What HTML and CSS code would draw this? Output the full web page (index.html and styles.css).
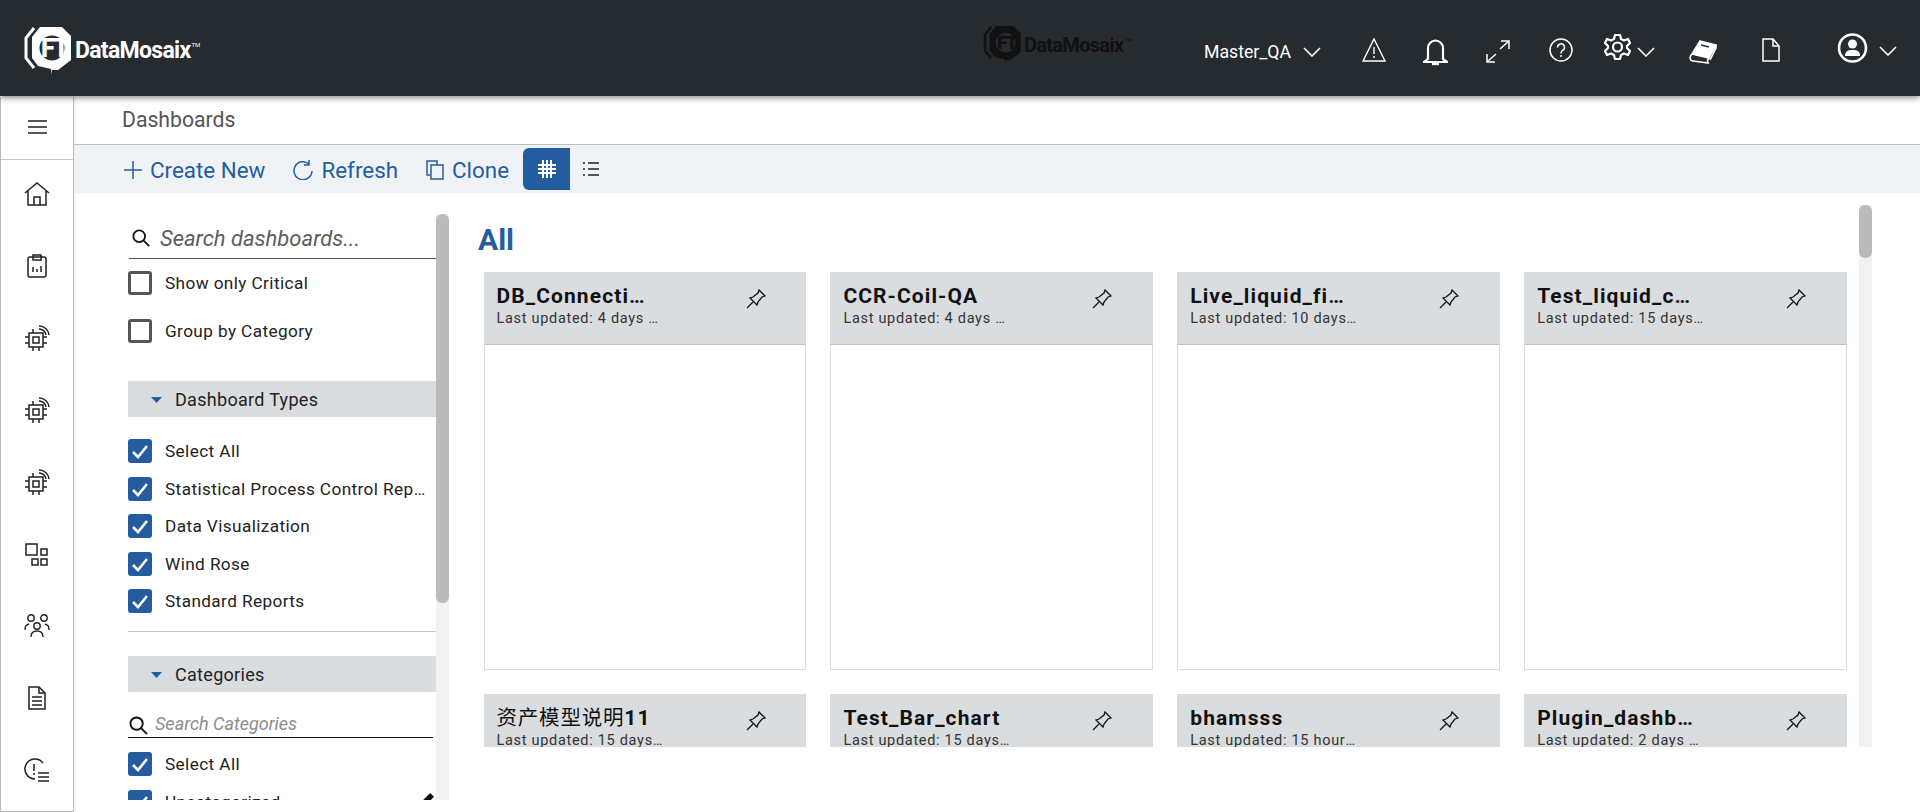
FILE: index.html
```html
<!DOCTYPE html>
<html lang="en">
<head>
  <meta charset="UTF-8">
  <title>Dashboards - DataMosaix</title>
  <link rel="stylesheet" href="styles.css">
</head>
<body>
  <svg class="defs" width="0" height="0">
    <symbol id="mark" viewBox="0 0 47 48">
      <path d="M16 0H38L47 9V33L34 43H28V48L27 42L14 39L8 31V10Z" fill="currentColor"/>
      <path d="M10 1L2 11V31L10 41" fill="none" stroke="currentColor" stroke-width="3"/>
      <circle cx="28" cy="21" r="12.5" fill="#262b30"/>
    </symbol>
    <symbol id="chevron" viewBox="0 0 18 10">
      <path d="M1 1L9 9L17 1" fill="none" stroke="currentColor" stroke-width="1.6"/>
    </symbol>
    <symbol id="chip" viewBox="0 0 26 26" fill="none" stroke="#222" stroke-width="1.5">
      <path d="M5 8H19V22H5Z"/>
      <path d="M9 12H15V18H9Z"/>
      <path d="M1 12H5M1 18H5M19 12H23M19 18H23M9 22V26M15 22V26M9 4V8"/>
      <path d="M15 4A7 7 0 0 1 22 10M15 1A10 10 0 0 1 25 10"/>
    </symbol>
    <symbol id="pin" viewBox="0 0 20 20" fill="none" stroke="#111" stroke-width="1.3">
      <path d="M13 1L19 7L16 8L12 13L11 16L4 9L7 8L12 4Z"/>
      <path d="M7 13L1 19"/>
    </symbol>
    <symbol id="search" viewBox="0 0 20 20" fill="none" stroke="#111" stroke-width="2">
      <circle cx="8" cy="8" r="6.5"/>
      <path d="M13 13L19 19"/>
    </symbol>
    <symbol id="tick" viewBox="0 0 24 24">
      <path d="M5 13L10 18L19 7" fill="none" stroke="#fff" stroke-width="2.6"/>
    </symbol>
    <symbol id="caret" viewBox="0 0 11 6">
      <path d="M0 0H11L5.500 6Z" fill="#245d9f"/>
    </symbol>
  </svg>

  <header class="top-bar">
    <div class="logo logo-main">
      <svg width="47" height="48"><use href="#mark"/></svg>
      <span class="logo-ft">FT</span>
      <span class="logo-name">DataMosaix</span><span class="logo-tm">TM</span>
    </div>
    <div class="logo logo-tenant">
      <svg width="38" height="38"><use href="#mark"/></svg>
      <span class="logo-ft">FT</span>
      <span class="logo-name">DataMosaix</span><span class="logo-tm">TM</span>
    </div>
    <div class="top-tools">
      <span class="tenant-name">Master_QA</span>
      <svg class="ic-tenant-chev" width="18" height="10"><use href="#chevron"/></svg>
      <svg class="ic-warn" width="24" height="24" viewBox="0 0 24 24" fill="none" stroke="#fff" stroke-width="1.4">
        <path d="M12 1L23 23H1Z"/>
        <path d="M12 9V16M12 18V20"/>
      </svg>
      <svg class="ic-bell" width="25" height="27" viewBox="0 0 25 27" fill="none" stroke="#fff" stroke-width="2.2">
        <path d="M5 20V9A7.500 7.500 0 0 1 20 9V20L24 23H1Z"/>
        <path d="M9 25H16" stroke-width="2.400"/>
      </svg>
      <svg class="ic-expand" width="24" height="23" viewBox="0 0 24 23" fill="none" stroke="#fff" stroke-width="1.5">
        <path d="M14 9L23 1M15 1H23V9M10 14L1 22M1 14V22H9"/>
      </svg>
      <svg class="ic-help" width="24" height="24" viewBox="0 0 24 24" fill="none" stroke="#fff" stroke-width="1.5">
        <circle cx="12" cy="12" r="11"/>
        <path d="M8.500 9.500A3.500 3.500 0 1 1 13.500 12.500C12.500 13 12 13.500 12 15.500M12 17V19"/>
      </svg>
      <svg class="ic-gear" width="27" height="26" viewBox="0 0 27 26" fill="none" stroke="#fff" stroke-width="2.2">
        <circle cx="13.500" cy="13" r="4.500"/>
        <path d="M11 1H16L17 5L20 6.500L24 5L26 9L23 12V14L26 17L24 21L20 19.500L17 21L16 25H11L10 21L7 19.500L3 21L1 17L4 14V12L1 9L3 5L7 6.500L10 5Z" stroke-linejoin="round"/>
      </svg>
      <svg class="ic-gear-chev" width="18" height="10"><use href="#chevron"/></svg>
      <svg class="ic-book" width="28" height="24" viewBox="0 0 28 24" fill="none" stroke="#fff" stroke-width="1.600">
        <path d="M11 1L27 5L20 18L3 14Z" fill="#fff"/>
        <path d="M3 14C0 17 1 21 4 21L19 23C18 21 18 20 20 18M27 5L27 8L21 20"/>
        <path d="M12 5L20 7" stroke="#262b30"/>
      </svg>
      <svg class="ic-file" width="18" height="24" viewBox="0 0 18 24" fill="none" stroke="#fff" stroke-width="1.500">
        <path d="M1 1H11L17 8V23H1Z"/>
        <path d="M11 1V8H17"/>
      </svg>
      <svg class="ic-user" width="31" height="30" viewBox="0 0 31 30">
        <circle cx="15.500" cy="15" r="13.500" fill="none" stroke="#fff" stroke-width="2.600"/>
        <circle cx="15.500" cy="11" r="4.500" fill="#fff"/>
        <path d="M8 23C8 18 11 17 15.500 17C20 17 23 18 23 23Z" fill="#fff"/>
      </svg>
      <svg class="ic-user-chev" width="18" height="10"><use href="#chevron"/></svg>
    </div>
  </header>

  <div class="app-body">
    <nav class="side-nav">
      <div class="side-toggle">
        <svg width="19" height="14" viewBox="0 0 19 14" fill="none" stroke="#222" stroke-width="1.500">
          <path d="M0 1H19M0 7H19M0 13H19"/>
        </svg>
      </div>
      <div class="side-links">
        <span class="side-link">
          <svg width="26" height="24" viewBox="0 0 26 24" fill="none" stroke="#222" stroke-width="1.500">
            <path d="M1 11L13 1L25 11M4 9V23H22V9M10 23V15H16V23"/>
          </svg>
        </span>
        <span class="side-link">
          <svg width="20" height="24" viewBox="0 0 20 24" fill="none" stroke="#222" stroke-width="1.500">
            <rect x="1" y="3" width="18" height="20" rx="2"/>
            <path d="M6 6V1H14V6ZM6 18V13M10 18V15M14 18V12"/>
          </svg>
        </span>
        <span class="side-link"><svg width="26" height="26"><use href="#chip"/></svg></span>
        <span class="side-link"><svg width="26" height="26"><use href="#chip"/></svg></span>
        <span class="side-link"><svg width="26" height="26"><use href="#chip"/></svg></span>
        <span class="side-link">
          <svg width="24" height="23" viewBox="0 0 24 23" fill="none" stroke="#222" stroke-width="1.500">
            <rect x="1" y="1" width="11" height="11"/>
            <rect x="16" y="6" width="6" height="6"/>
            <rect x="7" y="16" width="6" height="6"/>
            <rect x="16" y="16" width="6" height="6"/>
          </svg>
        </span>
        <span class="side-link">
          <svg width="26" height="24" viewBox="0 0 26 24" fill="none" stroke="#222" stroke-width="1.400">
            <circle cx="7" cy="4" r="3.200"/>
            <circle cx="20" cy="4" r="3.200"/>
            <circle cx="13" cy="12" r="3.200"/>
            <path d="M1 16C1 12 2 11 5 10M25 16C25 12 24 11 21 10M7 23C7 19 9 17 13 17C17 17 19 19 19 23"/>
          </svg>
        </span>
        <span class="side-link">
          <svg width="18" height="24" viewBox="0 0 18 24" fill="none" stroke="#222" stroke-width="1.500">
            <path d="M1 1H11L17 7V23H1Z"/>
            <path d="M11 1V7H17M4 11H14M4 15H14M4 19H14"/>
          </svg>
        </span>
        <span class="side-link">
          <svg width="26" height="24" viewBox="0 0 26 24" fill="none" stroke="#222" stroke-width="1.500">
            <path d="M19 5A10 10 0 1 0 11 21"/>
            <path d="M10 6V13M10 15V17M14 15H25M14 19H25M14 23H25"/>
          </svg>
        </span>
      </div>
    </nav>

    <main class="page">
      <div class="crumb">Dashboards</div>
      <div class="toolbar">
        <a class="tool-btn">
          <svg width="18" height="18" viewBox="0 0 18 18" fill="none" stroke="#245d9f" stroke-width="1.500"><path d="M9 0V18M0 9H18"/></svg>
          Create New
        </a>
        <a class="tool-btn">
          <svg width="20" height="20" viewBox="0 0 20 20" fill="none" stroke="#245d9f" stroke-width="1.500">
            <path d="M16 4A9 9 0 1 0 19 11M16 0V5H11"/>
          </svg>
          Refresh
        </a>
        <a class="tool-btn">
          <svg width="18" height="20" viewBox="0 0 18 20" fill="none" stroke="#245d9f" stroke-width="1.500">
            <path d="M4 15H1V1H11V5"/>
            <rect x="5" y="5" width="12" height="14"/>
          </svg>
          Clone
        </a>
        <span class="view-btn view-active">
          <svg width="18" height="18" viewBox="0 0 18 18" fill="none" stroke="#fff" stroke-width="2">
            <path d="M5 0V18M9 0V18M13 0V18M0 5H18M0 9H18M0 13H18"/>
          </svg>
        </span>
        <span class="view-btn">
          <svg width="16" height="14" viewBox="0 0 16 14" fill="none" stroke="#222" stroke-width="1.500">
            <path d="M0 1H2M5 1H16M0 7H2M5 7H16M0 13H2M5 13H16"/>
          </svg>
        </span>
      </div>

      <div class="content">
        <aside class="filters">
          <div class="filters-inner">
            <div class="search-box">
              <svg width="18" height="18"><use href="#search"/></svg>
              <span>Search dashboards...</span>
            </div>
            <label class="check-row first-check"><span class="box"></span><span class="check-text">Show only Critical</span></label>
            <label class="check-row group-check"><span class="box"></span><span class="check-text">Group by Category</span></label>

            <div class="section-bar types-bar"><svg width="11" height="6"><use href="#caret"/></svg>Dashboard Types</div>
            <label class="check-row"><span class="box box-on"><svg width="24" height="24"><use href="#tick"/></svg></span><span class="check-text">Select All</span></label>
            <label class="check-row"><span class="box box-on"><svg width="24" height="24"><use href="#tick"/></svg></span><span class="check-text">Statistical Process Control Reports</span></label>
            <label class="check-row"><span class="box box-on"><svg width="24" height="24"><use href="#tick"/></svg></span><span class="check-text">Data Visualization</span></label>
            <label class="check-row"><span class="box box-on"><svg width="24" height="24"><use href="#tick"/></svg></span><span class="check-text">Wind Rose</span></label>
            <label class="check-row"><span class="box box-on"><svg width="24" height="24"><use href="#tick"/></svg></span><span class="check-text">Standard Reports</span></label>
            <hr class="filter-line">

            <div class="section-bar"><svg width="11" height="6"><use href="#caret"/></svg>Categories</div>
            <div class="cat-search">
              <svg width="19" height="19"><use href="#search"/></svg>
              <span>Search Categories</span>
            </div>
            <label class="check-row"><span class="box box-on"><svg width="24" height="24"><use href="#tick"/></svg></span><span class="check-text">Select All</span></label>
            <label class="check-row"><span class="box box-on"><svg width="24" height="24"><use href="#tick"/></svg></span><span class="check-text">Uncategorized</span>
              <svg class="cat-edit" width="14" height="14" viewBox="0 0 11 11"><path d="M0 11V8L8 0L11 3L3 11Z" fill="#111"/></svg>
            </label>
          </div>
          <div class="scroll-track"><div class="scroll-thumb filters-thumb"></div></div>
        </aside>

        <section class="boards">
          <div class="boards-inner">
            <h2 class="boards-title">All</h2>
            <div class="board-grid">
              <article class="card"><div class="card-head"><div class="card-text"><div class="card-name">DB_Connection_Test</div><div class="card-date">Last updated: 4 days ago</div></div><svg width="20" height="20"><use href="#pin"/></svg></div></article>
              <article class="card"><div class="card-head"><div class="card-text"><div class="card-name">CCR-Coil-QA</div><div class="card-date">Last updated: 4 days ago</div></div><svg width="20" height="20"><use href="#pin"/></svg></div></article>
              <article class="card"><div class="card-head"><div class="card-text"><div class="card-name">Live_liquid_fill_board</div><div class="card-date">Last updated: 10 days ago</div></div><svg width="20" height="20"><use href="#pin"/></svg></div></article>
              <article class="card"><div class="card-head"><div class="card-text"><div class="card-name">Test_liquid_chart</div><div class="card-date">Last updated: 15 days ago</div></div><svg width="20" height="20"><use href="#pin"/></svg></div></article>
              <article class="card"><div class="card-head"><div class="card-text"><div class="card-name"><span class="name-cjk">资产模型说明</span>11</div><div class="card-date">Last updated: 15 days ago</div></div><svg width="20" height="20"><use href="#pin"/></svg></div></article>
              <article class="card"><div class="card-head"><div class="card-text"><div class="card-name">Test_Bar_chart</div><div class="card-date">Last updated: 15 days ago</div></div><svg width="20" height="20"><use href="#pin"/></svg></div></article>
              <article class="card"><div class="card-head"><div class="card-text"><div class="card-name">bhamsss</div><div class="card-date">Last updated: 15 hours ago</div></div><svg width="20" height="20"><use href="#pin"/></svg></div></article>
              <article class="card"><div class="card-head"><div class="card-text"><div class="card-name">Plugin_dashboard</div><div class="card-date">Last updated: 2 days ago</div></div><svg width="20" height="20"><use href="#pin"/></svg></div></article>
            </div>
          </div>
          <div class="scroll-track"><div class="scroll-thumb boards-thumb"></div></div>
        </section>
      </div>
    </main>
  </div>
</body>
</html>
```

FILE: styles.css
```css
* {
  box-sizing: border-box;
}
body {
  font-family: Roboto, 'Noto Sans CJK SC', sans-serif;
  margin: 0;
  height: 812px;
  overflow: hidden;
  background: #ffffff;
  color: #222222;
  display: flex;
  flex-direction: column;
}
svg {
  display: block;
  flex: none;
}
.defs {
  position: absolute;
}

/* Top bar */
.top-bar {
  height: 96px;
  flex: none;
  background: #262b30;
  box-shadow: 0 2px 6px rgba(0, 0, 0, 0.45);
  display: flex;
  align-items: center;
  padding-left: 24px;
  position: relative;
  z-index: 2;
}
.logo {
  display: flex;
  position: relative;
}
.logo-main {
  color: #ffffff;
  align-items: center;
  margin-top: 6px;
  width: 173px;
}
.logo-tenant {
  color: #111111;
  align-items: center;
  margin-top: -6px;
  margin-left: 786px;
  width: 142px;
}
.logo-ft {
  position: absolute;
  font-weight: 900;
  letter-spacing: -1.5px;
  color: #ffffff;
}
.logo-main .logo-ft {
  left: 17px;
  top: 9px;
  font-size: 25px;
  line-height: 25px;
}
.logo-tenant .logo-ft {
  left: 14px;
  top: 7px;
  font-size: 19px;
  line-height: 20px;
  color: #111111;
}
.logo-name {
  font-weight: 700;
  letter-spacing: -0.7px;
}
.logo-main .logo-name {
  font-size: 23px;
  margin-left: 4px;
  margin-top: -2px;
}
.logo-tenant .logo-name {
  font-size: 20px;
  margin-left: 3px;
}
.logo-tm {
  font-size: 6px;
  margin-left: 1px;
  align-self: flex-start;
}
.logo-main .logo-tm {
  margin-top: 14px;
}
.logo-tenant .logo-tm {
  margin-top: 10px;
}
.top-tools {
  margin-left: auto;
  padding-right: 23px;
  display: flex;
  align-items: center;
  color: #ffffff;
}
.tenant-name {
  font-size: 17.7px;
  margin-top: 8px;
}
.ic-tenant-chev { margin: 7px 0 0 12px; }
.ic-warn { margin: 4px 0 0 41px; }
.ic-bell { margin: 9px 0 0 37px; }
.ic-expand { margin: 7px 0 0 38px; }
.ic-help { margin: 4px 0 0 39px; }
.ic-gear { margin: -2px 0 0 31px; }
.ic-gear-chev { margin: 7px 0 0 6px; }
.ic-book { margin: 8px 0 0 34px; }
.ic-file { margin: 4px 0 0 45px; }
.ic-user { margin: 0 0 0 57px; }
.ic-user-chev { margin: 6px 0 0 11px; }

/* Page frame */
.app-body {
  flex: 1;
  display: flex;
  min-height: 0;
}
.side-nav {
  width: 74px;
  flex: none;
  margin-top: 1px;
  border: 1px solid #b9bdc1;
  border-top: none;
  background: #ffffff;
  box-shadow: 2px 0 3px rgba(0, 0, 0, 0.05);
  display: flex;
  flex-direction: column;
}
.side-toggle {
  height: 63px;
  flex: none;
  padding-bottom: 2px;
  border-bottom: 1px solid #c9cccf;
  display: flex;
  align-items: center;
  justify-content: center;
}
.side-links {
  display: flex;
  flex-direction: column;
  margin-top: -2px;
}
.side-link {
  height: 72px;
  display: flex;
  align-items: center;
  justify-content: center;
}
.page {
  flex: 1;
  min-width: 0;
  display: flex;
  flex-direction: column;
}
.crumb {
  height: 49px;
  flex: none;
  padding-left: 48px;
  font-size: 21.2px;
  line-height: 48px;
  color: #555555;
  border-bottom: 1px solid #b9bdc1;
}
.toolbar {
  height: 48px;
  flex: none;
  background: #eff3f6;
  display: flex;
  align-items: center;
  padding-left: 50px;
  color: #245d9f;
}
.tool-btn {
  display: flex;
  align-items: center;
  gap: 8px;
  font-size: 22.4px;
  line-height: 28px;
  padding-top: 2px;
  margin-right: 28px;
}
.view-btn {
  width: 47px;
  height: 42px;
  display: flex;
  align-items: center;
  justify-content: center;
}
.view-active {
  background: #245d9f;
  border-radius: 6px 0 0 6px;
  margin-left: -14px;
}
.view-btn:last-child {
  margin-left: -3px;
}

/* Filters */
.content {
  flex: 1;
  min-height: 0;
  display: flex;
}
.filters {
  width: 375px;
  flex: none;
  height: 586px;
  margin-top: 21px;
  padding-left: 54px;
  display: flex;
}
.filters-inner {
  width: 308px;
  flex: none;
  height: 586px;
  overflow: hidden;
}
.scroll-track {
  width: 13px;
  flex: none;
  background: #f2f2f2;
}
.scroll-thumb {
  background: #bbbbbb;
  border-radius: 6px;
}
.filters-thumb {
  height: 389px;
}
.boards-thumb {
  height: 53px;
}
.search-box {
  height: 45px;
  width: 307px;
  margin-left: 1px;
  border-bottom: 1.500px solid #555555;
  display: flex;
  align-items: center;
  gap: 10px;
  padding: 4px 0 0 3px;
  font-size: 22px;
  font-style: italic;
  color: #5c5c5c;
}
.check-row {
  height: 24px;
  margin-bottom: 13.500px;
  display: flex;
  align-items: center;
  gap: 13px;
  font-size: 17.2px;
  letter-spacing: 0.4px;
  color: #222222;
}
.first-check {
  margin-top: 12px;
  margin-bottom: 24px;
}
.group-check {
  margin-bottom: 38px;
}
.box {
  width: 24px;
  height: 24px;
  flex: none;
  border: 3px solid #555555;
  border-radius: 3px;
  background: #ffffff;
}
.box-on {
  border: none;
  background: #245d9f;
}
.check-text {
  flex: 1;
  min-width: 0;
  padding-right: 1px;
  white-space: nowrap;
  overflow: hidden;
  text-overflow: ellipsis;
}
.cat-edit {
  margin-right: 2px;
  margin-top: -4px;
}
.section-bar {
  height: 36px;
  padding-top: 1px;
  background: #dadde0;
  display: flex;
  align-items: center;
  gap: 13px;
  padding-left: 23px;
  font-size: 18px;
  letter-spacing: 0.3px;
}
.types-bar {
  margin-bottom: 22px;
}
.filter-line {
  margin: 18px 0 24px;
  border: none;
  border-top: 1px solid #c8c8c8;
}
.cat-search {
  height: 22px;
  width: 305px;
  margin: 24px 0 14px;
  border-bottom: 1.500px solid #111111;
  display: flex;
  align-items: flex-start;
  gap: 7px;
  padding-left: 1px;
  font-size: 18px;
  line-height: 16px;
  font-style: italic;
  color: #8c8c8c;
}

/* Dashboard cards */
.boards {
  flex: 1;
  min-width: 0;
  height: 542px;
  margin-top: 12px;
  padding-right: 48px;
  display: flex;
}
.boards-inner {
  flex: 1;
  min-width: 0;
  overflow: hidden;
  padding-right: 12px;
}
.boards-title {
  margin: 17px 0 15px 29px;
  font-size: 30px;
  line-height: 35px;
  font-weight: 700;
  color: #245d9f;
}
.board-grid {
  margin-left: 34.5px;
  display: grid;
  grid-template-columns: repeat(4, 1fr);
  gap: 24px;
}
.card {
  height: 398px;
  border: 1px solid #dcdcdc;
}
.card-head {
  height: 73px;
  margin: -1px -1px 0;
  background: #dadde0;
  border-bottom: 1px solid #bfc3c7;
  display: flex;
  align-items: flex-start;
  padding: 11px 0 0 13px;
}
.card-head svg {
  margin: 6px 0 0 81px;
}
.card-text {
  width: 168px;
  flex: none;
}
.card-name {
  max-width: 160px;
  font-size: 21px;
  line-height: 26px;
  font-weight: 700;
  letter-spacing: 1.1px;
  color: #111111;
  white-space: nowrap;
  overflow: hidden;
  text-overflow: ellipsis;
}
.name-cjk {
  font-size: 20.5px;
  font-weight: 400;
  letter-spacing: 0.8px;
}
.card-date {
  font-size: 14.5px;
  line-height: 20px;
  letter-spacing: 0.7px;
  color: #333333;
  white-space: nowrap;
  overflow: hidden;
  text-overflow: ellipsis;
}
```
